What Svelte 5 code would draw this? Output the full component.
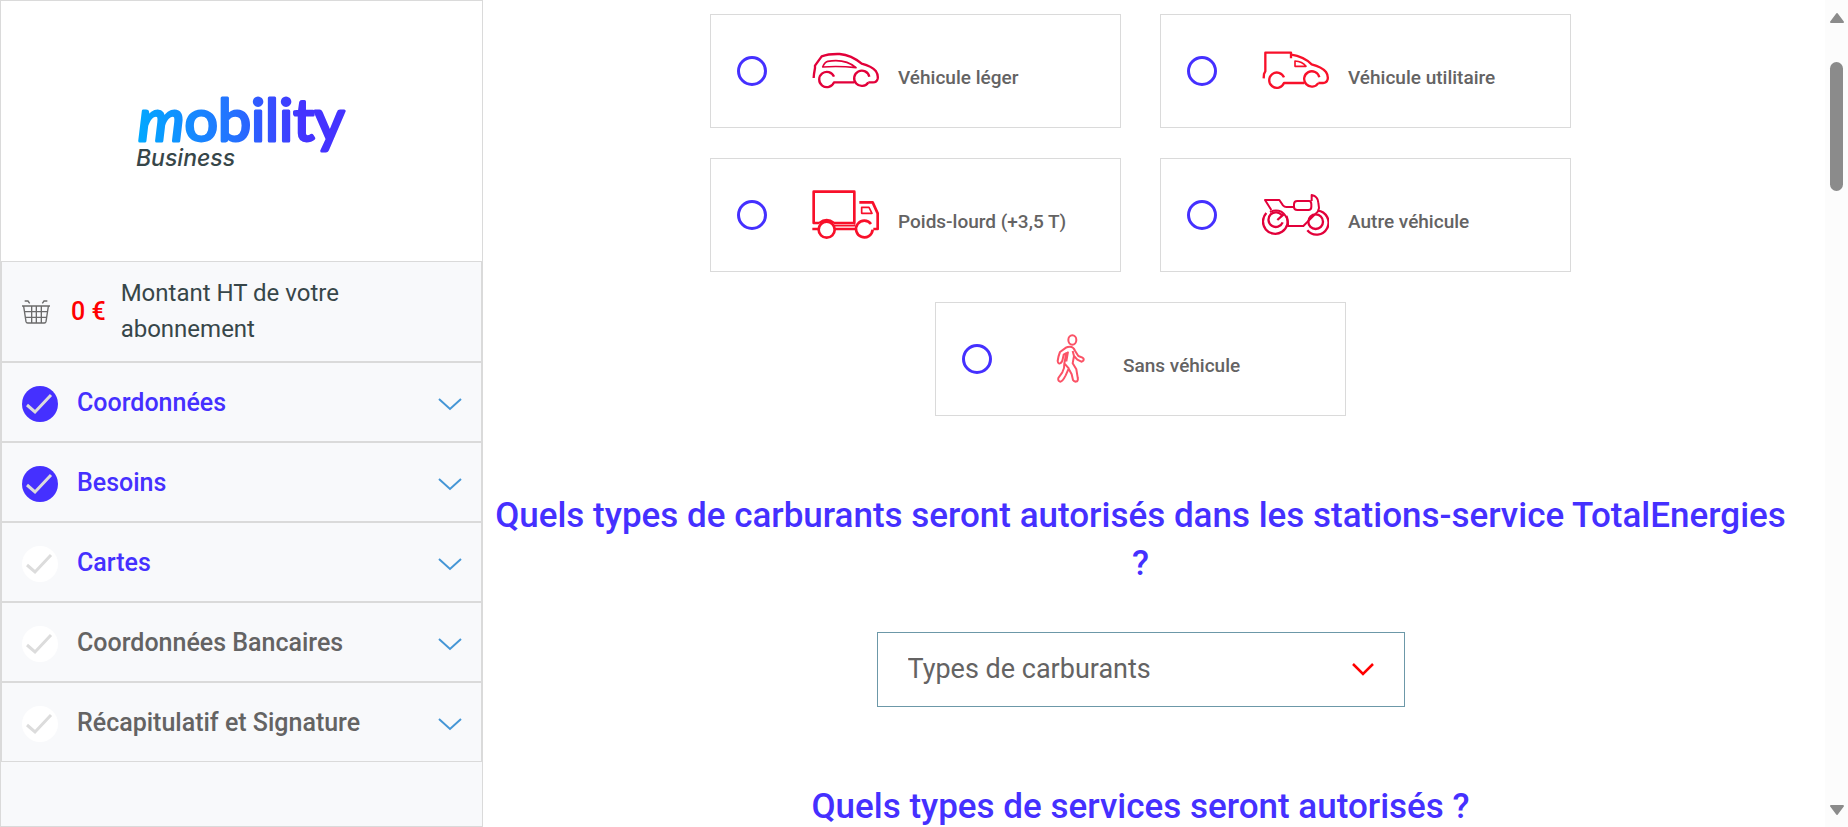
<script>
  const steps = [
    { label: 'Coordonnées', done: true, active: true },
    { label: 'Besoins', done: true, active: true },
    { label: 'Cartes', done: false, active: true },
    { label: 'Coordonnées Bancaires', done: false, active: false },
    { label: 'Récapitulatif et Signature', done: false, active: false }
  ];

  const vehicles = [
    { id: 'car', label: 'Véhicule léger' },
    { id: 'van', label: 'Véhicule utilitaire' },
    { id: 'truck', label: 'Poids-lourd (+3,5 T)' },
    { id: 'moto', label: 'Autre véhicule' },
    { id: 'walk', label: 'Sans véhicule' }
  ];

  let selected = $state('');
</script>

<div class="page">
  <aside class="sidebar">
    <div class="brand">
      <svg class="logo" viewBox="0 0 220 120" role="img" aria-label="mobility Business">
        <defs>
          <linearGradient id="brand" gradientUnits="userSpaceOnUse" x1="4" y1="70" x2="200" y2="50">
            <stop offset="0" stop-color="#00aaff" />
            <stop offset="0.5" stop-color="#2472ff" />
            <stop offset="0.85" stop-color="#4433ff" />
          </linearGradient>
        </defs>
        <text class="word" x="6" y="70"><tspan font-style="italic">m</tspan>obility</text>
        <text class="sub" x="4" y="95">Business</text>
      </svg>
    </div>

    <div class="amount">
      <svg class="basket" viewBox="0 0 84 72" aria-hidden="true">
        <path d="M8 3h10l5 7M76 3h-10l-5 7M0 18h84M5 19l7 46q1 4 5 4h50q4 0 5-4l7-46M8 35h68M10 52h64M29 19v50M43 19v50M58 19v50" />
      </svg>
      <strong class="price">0 €</strong>
      <span class="amount-label">Montant HT de votre abonnement</span>
    </div>

    <nav>
      {#each steps as step}
        <button type="button" class="step" class:active={step.active}>
          <svg class="tick" class:done={step.done} viewBox="0 0 36 36" aria-hidden="true">
            <circle cx="18" cy="18" r="18" />
            <path d="M5 19l8 7 16-17" />
          </svg>
          <span class="step-label">{step.label}</span>
          <svg class="chevron" viewBox="0 0 24 14" aria-hidden="true"><path d="M1 2l11 10L23 2" /></svg>
        </button>
      {/each}
    </nav>
  </aside>

  <main>
    <div class="vehicles" role="radiogroup" aria-label="Véhicule">
      {#each vehicles as v}
        <label class="card">
          <input type="radio" name="vehicle" value={v.id} bind:group={selected} />
          <svg class="picture {v.id}" viewBox="0 0 201 150" aria-hidden="true">
            {#if v.id === 'car'}
              <path d="M5 96L6 84 9 66V59L29 31Q50 23 83 24 118 27 149 53 180 61 192 76 199 86 197 98 194 110 181 109H169" />
              <path d="M66 92A23 23 0 1 0 66 109H127M172 92A23 23 0 1 0 169 109" />
              <path class="thin" d="M32 63Q38 48 47 46 100 37 132 65Q80 59 32 63Z" />
            {:else if v.id === 'van'}
              <path d="M5 97L6 84 10 76V20H87V37M88 26Q124 31 149 55 180 63 192 78 199 88 197 100 194 112 181 111H169" />
              <path d="M66 94A23 23 0 1 0 66 111H127M172 94A23 23 0 1 0 169 111" />
              <path class="thin" d="M99 45V61H132Q121 46 99 45Z" />
            {:else if v.id === 'truck'}
              <path class="thick" d="M22 99H5V5H127V99H66M22 99Q44 82 66 99" />
              <circle class="thick" cx="44" cy="119" r="24" />
              <path class="thick" d="M1 117H18M69 117H131" />
              <path class="thin" d="M66 107H128V103" />
              <path class="thick" d="M142 37H182L197 70V117H184" />
              <path class="thick" d="M177 102A25 25 0 1 0 182 119" />
              <path class="thin" d="M149 52H171L180 70H149Z" />
            {:else if v.id === 'moto'}
              <path class="medium" d="M28 60L9 30H52L63 46Q67 51 73 51H96M96 43Q96 33 106 33H141Q148 33 148 43V51Q148 60 139 60H106Q96 60 96 51ZM149 33V15Q168 19 169 38L171 54 168 64 124 108H78Q80 80 58 65 41 57 24 66" />
              <path d="M13 69A37 37 0 1 0 73 78M60 77A22 22 0 1 0 62 97M65 73L46 90M167 62A36 36 0 1 1 136 121" />
              <circle cx="161" cy="95" r="22" />
            {:else}
              <ellipse cx="106" cy="18" rx="12" ry="14" />
              <path d="M87 41L69 54Q64 66 62 81 63 90 69 88 75 86 77 76L80 62 88 57 82 88Q83 103 76 115L64 132Q62 142 70 143 77 142 86 124L95 104 104 121 108 138Q112 145 120 142 124 139 122 130L118 106 107 88 111 66 121 77 133 83Q141 81 140 75 139 71 124 66L114 50Q109 38 99 38 91 38 87 41ZM82 88L96 104M93 53L88 82M111 66L107 51" />
            {/if}
          </svg>
          <span class="card-label">{v.label}</span>
        </label>
      {/each}
    </div>

    <h2>Quels types de carburants seront autorisés dans les stations-service TotalEnergies ?</h2>

    <div class="select-box">
      <select aria-label="Types de carburants">
        <option>Types de carburants</option>
      </select>
      <svg class="select-arrow" viewBox="0 0 24 14" aria-hidden="true"><path d="M2 1l10 10L22 1" /></svg>
    </div>

    <h2>Quels types de services seront autorisés ?</h2>
  </main>

  <div class="scrollbar" aria-hidden="true">
    <svg viewBox="0 0 16 12"><path d="M8 2L14 10H2Z" /></svg>
    <div class="track"><div class="thumb"></div></div>
    <svg viewBox="0 0 16 12"><path d="M8 10L14 2H2Z" /></svg>
  </div>
</div>

<style>
  :global(body) {
    margin: 0;
  }

  .page {
    display: grid;
    grid-template-columns: minmax(0, 483fr) minmax(0, 1342fr) 23px;
    grid-template-rows: 100vh;
    height: 100vh;
    overflow: hidden;
    background: #fff;
    font-family: Roboto, 'Liberation Sans', sans-serif;
    color: #374649;
  }

  .page * {
    box-sizing: border-box;
  }

  .sidebar {
    background: #f8f9fb;
    border: 1px solid #dadada;
  }

  .brand {
    display: flex;
    justify-content: center;
    align-items: center;
    height: 260px;
    background: #fff;
  }

  .logo {
    width: 220px;
    height: 120px;
    overflow: visible;
  }

  .word {
    font: 400 59px Lato, sans-serif;
    fill: url(#brand);
    stroke: url(#brand);
    stroke-width: 3px;
    stroke-linejoin: round;
  }

  .sub {
    font: italic 500 23px Inter, sans-serif;
    fill: #374649;
  }

  .amount {
    display: flex;
    align-items: center;
    min-height: 101px;
    padding: 0 20px;
    border: 1px solid #dadada;
    font-size: 24px;
    line-height: 36px;
  }

  .basket {
    flex: none;
    width: 28px;
    height: 24px;
    fill: none;
    stroke: #6b6b6b;
    stroke-width: 4;
  }

  .price {
    flex: none;
    margin: 0 15px 0 21px;
    color: #f00;
    font-size: 25px;
    font-weight: 500;
  }

  .amount-label {
    max-width: 260px;
    padding-bottom: 2px;
  }

  .step {
    display: flex;
    align-items: center;
    width: 100%;
    height: 80px;
    padding: 0 19px 0 20px;
    border: 1px solid #dadada;
    background: none;
    font: 500 25px/36px Roboto, 'Liberation Sans', sans-serif;
    color: #646363;
    text-align: left;
  }

  .step.active {
    color: #4530ff;
  }

  .step-label {
    flex: 1;
    margin-left: 19px;
    padding-top: 2px;
  }

  .tick {
    flex: none;
    width: 36px;
    height: 36px;
    margin-top: 3px;
    fill: #fff;
  }

  .tick.done {
    fill: #4530ff;
  }

  .tick path {
    fill: none;
    stroke: #dcdcdc;
    stroke-width: 3;
  }

  .chevron {
    flex: none;
    width: 24px;
    height: 14px;
    margin-top: 3px;
    fill: none;
    stroke: #4596d6;
    stroke-width: 2;
  }

  main {
    padding: 14px 27px 0 0;
  }

  .vehicles {
    display: flex;
    flex-wrap: wrap;
    justify-content: center;
    gap: 30px 39px;
    max-width: 900px;
    margin: 0 auto;
  }

  .card {
    display: flex;
    align-items: center;
    width: 411px;
    height: 114px;
    padding: 0 26px;
    border: 1px solid #dadada;
  }

  .card input {
    appearance: none;
    flex: none;
    width: 30px;
    height: 30px;
    margin: 0;
    border: 3px solid #4530ff;
    border-radius: 50%;
    background: #fff;
  }

  .card input:checked {
    background: radial-gradient(#4530ff 50%, #fff 55%);
  }

  .picture {
    flex: none;
    width: 67px;
    height: 50px;
    margin: 0 19px 0 45px;
    fill: none;
    stroke: #e2003a;
    stroke-width: 7;
    stroke-linejoin: round;
  }

  .picture.van,
  .picture.truck {
    stroke: #f8102a;
  }

  .picture.walk {
    stroke: #fb5266;
    stroke-width: 6;
  }

  .picture .thin {
    stroke-width: 5;
  }

  .picture .medium {
    stroke-width: 6;
  }

  .picture .thick {
    stroke-width: 8;
  }

  .card-label {
    padding-top: 13px;
    font-size: 19px;
    font-weight: 500;
    line-height: 30px;
    color: #646363;
  }

  h2 {
    margin: 76px 8px 0;
    font-size: 35px;
    font-weight: 500;
    line-height: 48px;
    text-align: center;
    color: #4530ff;
  }

  .select-box {
    display: grid;
    align-items: center;
    width: 528px;
    max-width: 100%;
    margin: 44px auto 0;
  }

  select {
    grid-area: 1 / 1;
    appearance: none;
    width: 100%;
    height: 75px;
    padding: 0 30px 2px;
    border: 1px solid #6c98a8;
    border-radius: 0;
    background: #fff;
    font: 400 27px/36px Roboto, 'Liberation Sans', sans-serif;
    color: #646363;
  }

  .select-arrow {
    grid-area: 1 / 1;
    justify-self: end;
    width: 24px;
    height: 14px;
    margin-right: 30px;
    fill: none;
    stroke: #f00;
    stroke-width: 2.5;
    pointer-events: none;
  }

  .scrollbar {
    display: flex;
    flex-direction: column;
    align-items: center;
    padding: 12px 0 11px;
    background: #fcfcfc;
  }

  .scrollbar svg {
    width: 16px;
    height: 12px;
    fill: #8b8b8b;
    stroke: #8b8b8b;
    stroke-width: 2;
    stroke-linejoin: round;
  }

  .track {
    flex: 1;
    padding-top: 38px;
  }

  .thumb {
    width: 13px;
    height: 129px;
    border-radius: 7px;
    background: #8b8b8b;
  }
</style>
